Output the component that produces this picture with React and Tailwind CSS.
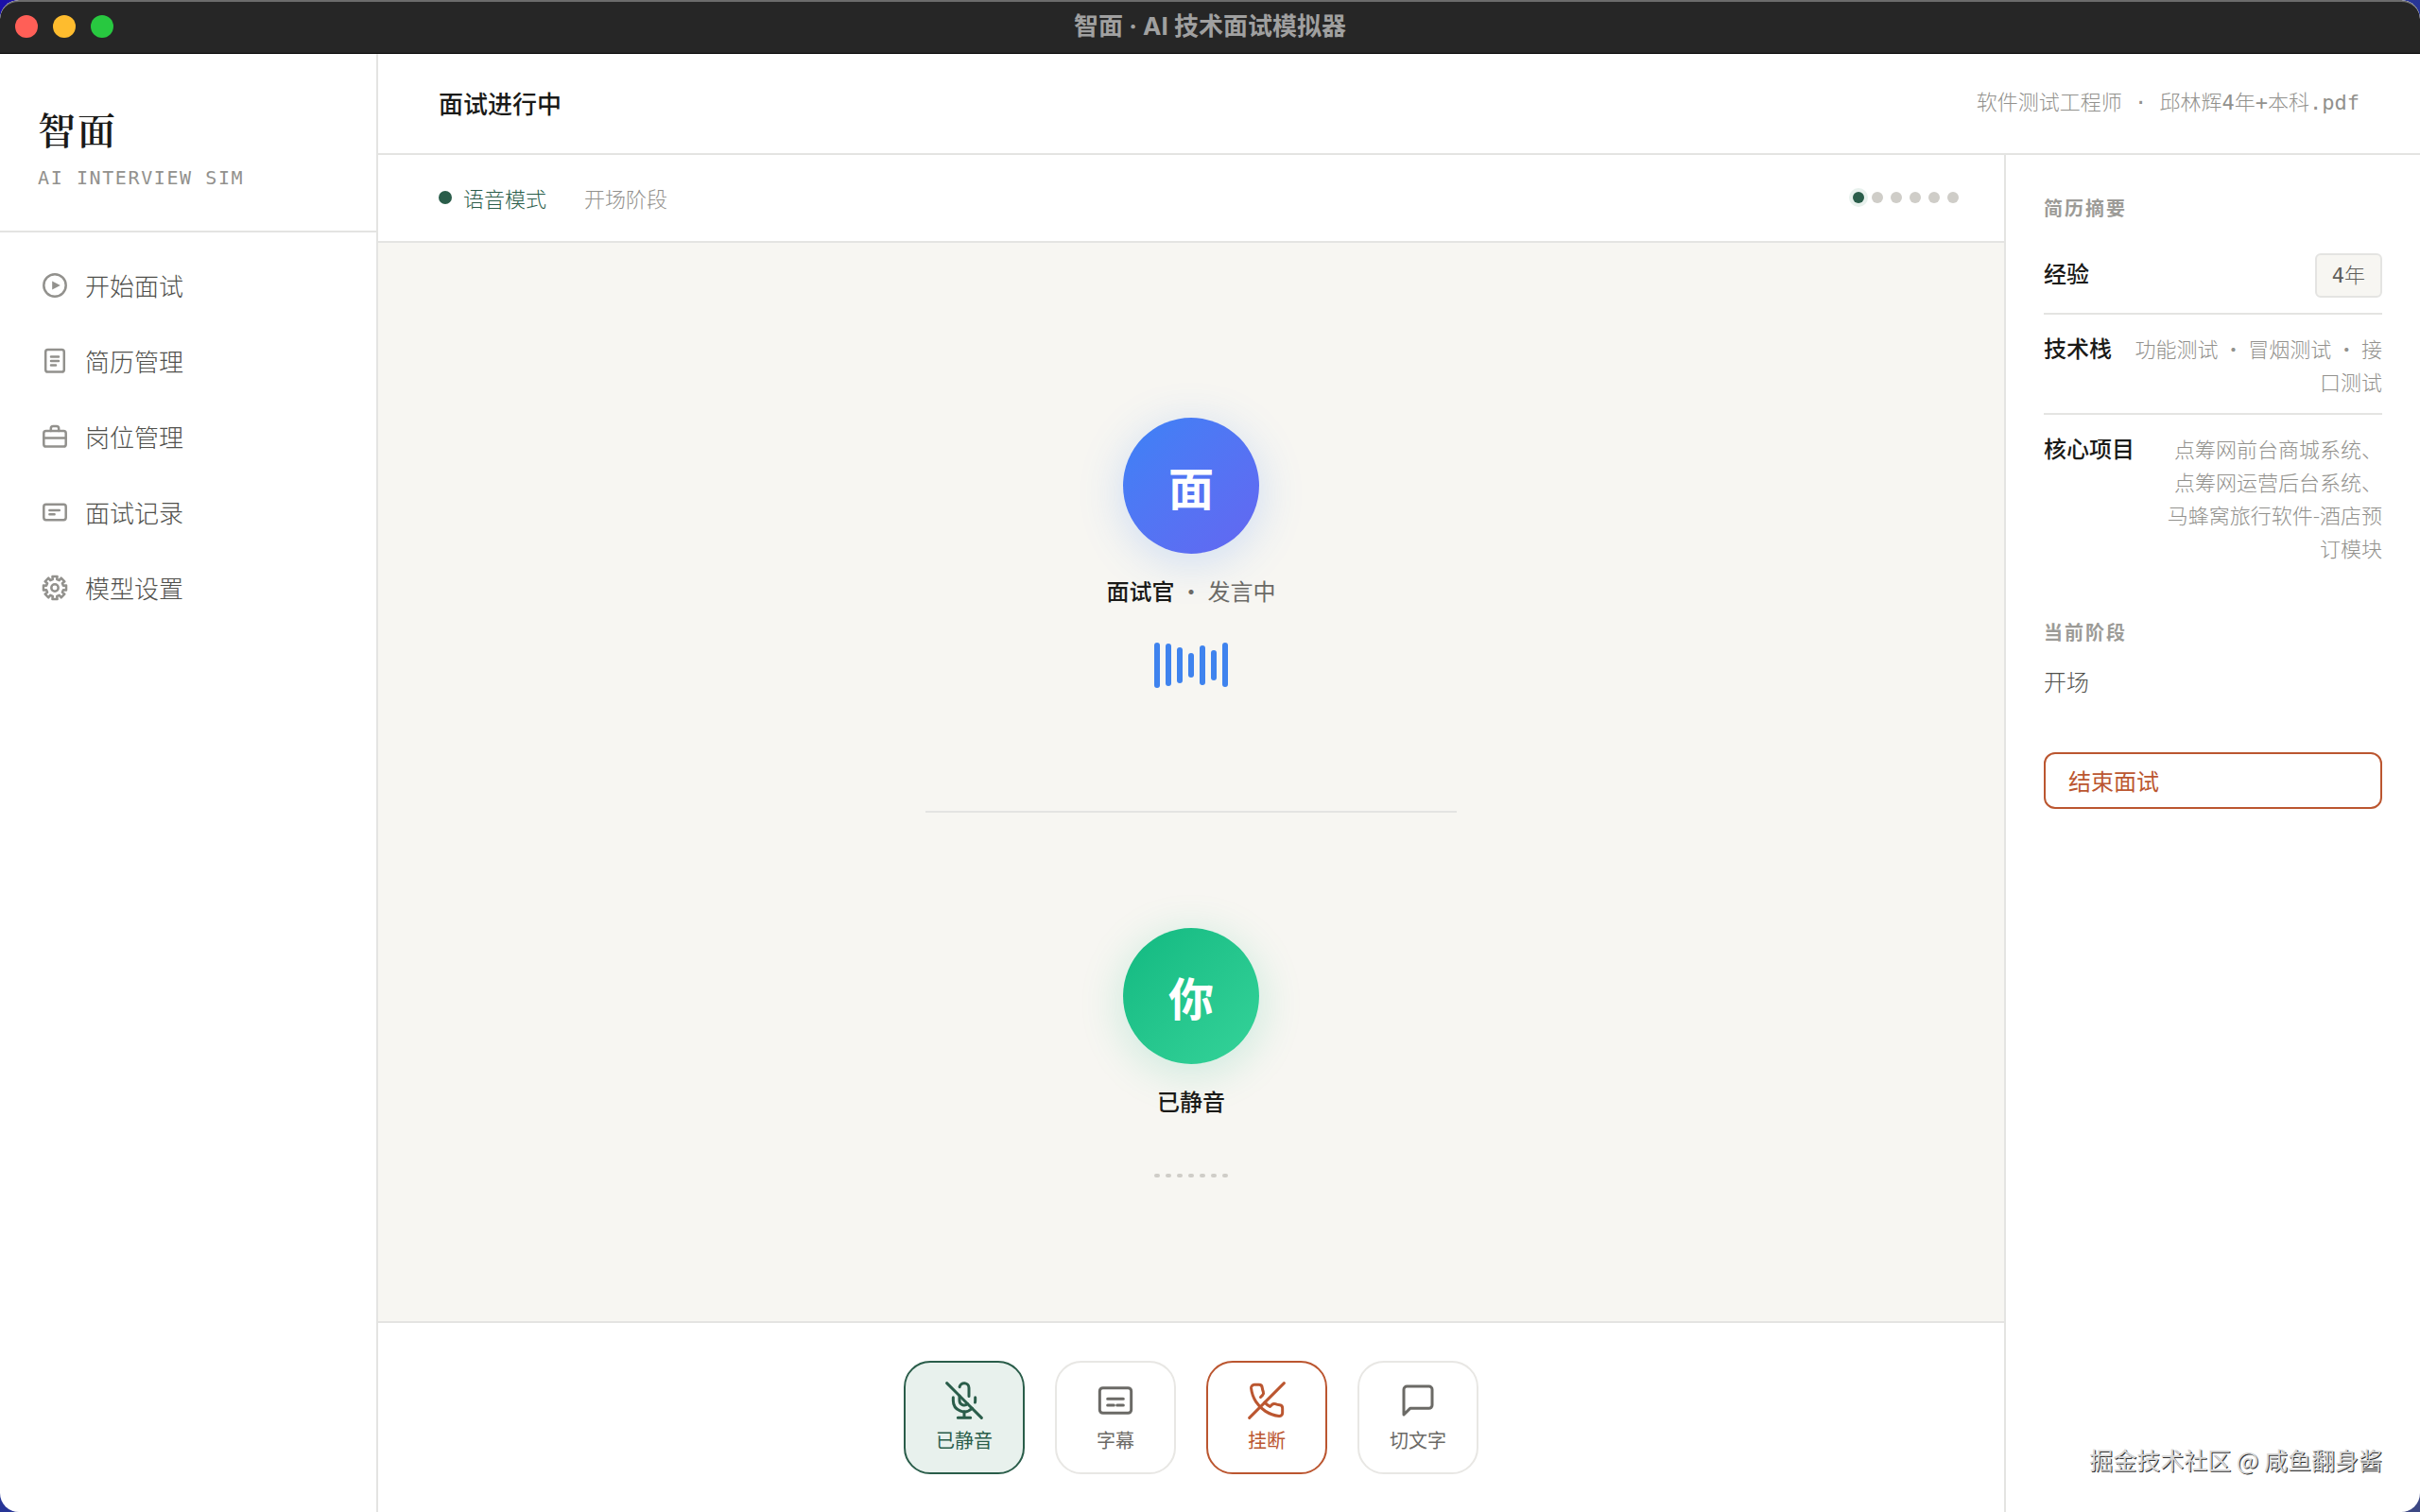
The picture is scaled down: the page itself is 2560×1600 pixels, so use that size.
import { useState } from 'react'
import clsx from 'clsx'

const NAV_ITEMS = [
  { id: 'start', label: '开始面试', icon: PlayIcon },
  { id: 'resume', label: '简历管理', icon: ResumeIcon },
  { id: 'position', label: '岗位管理', icon: BriefcaseIcon },
  { id: 'record', label: '面试记录', icon: RecordIcon },
  { id: 'model', label: '模型设置', icon: GearIcon },
]

const STAGES = ['开场', '自我介绍', '技术', '项目', '反问', '总结']
const SPEAKING_LEVELS = [48, 45, 38, 26, 42, 32, 47]
const SILENT_LEVELS = [4, 4, 4, 4, 4, 4, 4]

export default function App() {
  const [muted, setMuted] = useState(true)
  const [stage] = useState(0)

  return (
    <div lang="zh-CN" className="min-h-screen bg-linear-to-br from-[#1b10a8] to-[#3c4884] font-['Noto_Sans_CJK_SC',sans-serif]">
      <div className="relative flex min-h-screen flex-col overflow-hidden rounded-[20px] bg-white">
        <TitleBar />
        <div className="flex flex-1">
          <Sidebar />
          <div className="flex min-w-0 flex-1 flex-col">
            <header className="flex h-[107px] items-center justify-between border-b-2 border-[#e4e4e2] px-16 pb-0.5">
              <h1 className="text-[26px] leading-10 font-medium text-[#1a1a18]">面试进行中</h1>
              <p className="font-['DejaVu_Sans_Mono','Noto_Sans_CJK_SC',monospace] text-[22px] leading-9 font-light text-[#92918d]">
                软件测试工程师 · 邱林辉4年+本科.pdf
              </p>
            </header>
            <div className="flex flex-1">
              <main className="flex min-w-0 flex-1 flex-col">
                <StatusBar stage={stage} />
                <VoiceStage muted={muted} />
                <CallControls muted={muted} onToggleMute={() => setMuted(!muted)} />
              </main>
              <SummaryPanel stage={stage} />
            </div>
          </div>
        </div>
        <div className="pointer-events-none absolute right-10 bottom-[38px] text-[25px] leading-9 text-[#d8d8d8] [text-shadow:1px_1px_0_#333]">
          掘金技术社区 @ 咸鱼翻身酱
        </div>
      </div>
    </div>
  )
}

function TitleBar() {
  return (
    <div className="relative flex h-[57px] items-center justify-center rounded-t-[20px] border-t-2 border-b border-t-[#6b6b6b] border-b-black bg-[#262626] pb-0.5">
      <div className="absolute left-4 flex gap-4">
        <span className="size-6 rounded-full bg-[#ff5f57]" />
        <span className="size-6 rounded-full bg-[#febc2e]" />
        <span className="size-6 rounded-full bg-[#28c840]" />
      </div>
      <span className="font-[Inter,'Noto_Sans_CJK_SC',sans-serif] text-[26px] leading-9 font-bold text-[#a0a0a0]">
        智面 · AI 技术面试模拟器
      </span>
    </div>
  )
}

function Sidebar() {
  return (
    <aside className="w-[400px] shrink-0 border-r-2 border-[#e4e4e2]">
      <div className="border-b-2 border-[#e4e4e2] px-10 pt-[47px] pb-10">
        <div className="font-['Noto_Serif_CJK_SC','Noto_Sans_CJK_SC',serif] text-[40px] leading-16 font-semibold tracking-wider text-[#1a1a18]">
          智面
        </div>
        <div className="mt-1 font-['DejaVu_Sans_Mono',monospace] text-xl leading-8 tracking-[0.08em] text-[#92918d]">
          AI INTERVIEW SIM
        </div>
      </div>
      <nav className="flex flex-col pt-4">
        {NAV_ITEMS.map(({ id, label, icon: Icon }) => (
          <button key={id} type="button" className="flex h-20 items-center gap-3.5 px-10 text-left">
            <Icon />
            <span className="text-[26px] leading-10 font-light text-[#50504c]">{label}</span>
          </button>
        ))}
      </nav>
    </aside>
  )
}

function StatusBar({ stage }) {
  return (
    <div className="flex h-[93px] items-center border-b-2 border-[#e4e4e2] pr-12 pb-0.5 pl-16 text-[22px] leading-9 font-light">
      <span className="mr-3 size-3.5 rounded-full bg-[#2a5d4a]" />
      <span className="text-[#2a5d4a]">语音模式</span>
      <span className="ml-10 text-[#92918d]">{STAGES[stage]}阶段</span>
      <div className="ml-auto flex gap-2">
        {STAGES.map((name, i) => (
          <span
            key={name}
            className={clsx(
              'size-3 rounded-full',
              i === stage ? 'bg-[#2a5d4a] ring-4 ring-[#e8f1ed]' : 'bg-[#cfcdc8]'
            )}
          />
        ))}
      </div>
    </div>
  )
}

function VoiceStage({ muted }) {
  return (
    <section className="flex flex-1 flex-col items-center justify-center bg-[#f7f6f2] pt-[54px]">
      <Participant
        initial="面"
        avatarClass="from-[#3b82f6] to-[#6366f1] shadow-[0_8px_48px_rgba(59,130,246,0.22)]"
        levels={SPEAKING_LEVELS}
        barClass="bg-[#3f83ee]"
      >
        面试官 <span className="font-normal text-[#6b6a66]">・ 发言中</span>
      </Participant>
      <div className="mt-[130px] mb-[122px] h-0.5 w-[562px] bg-[#e4e4e2]" />
      <Participant
        initial="你"
        avatarClass="from-[#10b981] to-[#34d399] shadow-[0_8px_48px_rgba(16,185,129,0.2)]"
        levels={SILENT_LEVELS}
        barClass="bg-[#cfcdc8]"
      >
        {muted ? '已静音' : '聆听中'}
      </Participant>
    </section>
  )
}

function Participant({ initial, avatarClass, levels, barClass, children }) {
  return (
    <div className="flex flex-col items-center">
      <div
        className={clsx(
          'flex size-36 items-center justify-center rounded-full bg-linear-135 text-5xl font-bold text-white',
          avatarClass
        )}
      >
        {initial}
      </div>
      <p className="mt-5 text-2xl leading-[38px] font-medium text-[#1a1a18]">{children}</p>
      <div className="mt-9 flex h-12 items-center gap-1.5">
        {levels.map((level, i) => (
          <span key={i} className={clsx('w-1.5 rounded-full', barClass)} style={{ height: level }} />
        ))}
      </div>
    </div>
  )
}

function CallControls({ muted, onToggleMute }) {
  return (
    <footer className="flex justify-center gap-8 border-t-2 border-[#e4e4e2] py-10">
      <ControlButton
        label={muted ? '已静音' : '静音'}
        onClick={onToggleMute}
        className={muted ? 'border-[#2a5d4a] bg-[#e8f1ed] text-[#2a5d4a]' : 'border-[#e8e7e4] text-[#6b6a66]'}
      >
        <line x1="1" y1="1" x2="23" y2="23" />
        <path d="M9 9v3a3 3 0 0 0 5.12 2.12M15 9.34V4a3 3 0 0 0-5.94-.6" />
        <path d="M17 16.95A7 7 0 0 1 5 12v-2m14 0v2a7 7 0 0 1-.11 1.23" />
        <path d="M12 19v4M8 23h8" />
      </ControlButton>
      <ControlButton label="字幕" className="border-[#e8e7e4] text-[#6b6a66]">
        <rect x="2" y="4" width="20" height="16" rx="2" />
        <path d="M7 11h10M7 15h4M13 15h4" />
      </ControlButton>
      <ControlButton label="挂断" className="border-[#bb5630] text-[#bb5630]">
        <path d="M10.68 13.31a16 16 0 0 0 3.41 2.6l1.27-1.27a2 2 0 0 1 2.11-.45 12.84 12.84 0 0 0 2.81.7 2 2 0 0 1 1.72 2v3a2 2 0 0 1-2.18 2 19.79 19.79 0 0 1-8.63-3.07 19.42 19.42 0 0 1-6-6 19.79 19.79 0 0 1-3.07-8.67A2 2 0 0 1 4.11 2h3a2 2 0 0 1 2 1.72 12.84 12.84 0 0 0 .7 2.81 2 2 0 0 1-.45 2.11L8.09 9.91" />
        <line x1="23" y1="1" x2="1" y2="23" />
      </ControlButton>
      <ControlButton label="切文字" className="border-[#e8e7e4] text-[#6b6a66]">
        <path d="M21 15a2 2 0 0 1-2 2H7l-4 4V5a2 2 0 0 1 2-2h14a2 2 0 0 1 2 2z" />
      </ControlButton>
    </footer>
  )
}

function ControlButton({ label, className, onClick, children }) {
  return (
    <button
      type="button"
      onClick={onClick}
      className={clsx('flex h-30 w-32 flex-col items-center justify-center gap-2 rounded-[28px] border-2', className)}
    >
      <svg
        viewBox="0 0 24 24"
        className="size-10"
        fill="none"
        stroke="currentColor"
        strokeWidth="1.8"
        strokeLinecap="round"
        strokeLinejoin="round"
        aria-hidden="true"
      >
        {children}
      </svg>
      <span className="text-xl leading-7">{label}</span>
    </button>
  )
}

function SummaryPanel({ stage }) {
  return (
    <aside className="w-[440px] shrink-0 border-l-2 border-[#e4e4e2] px-10 pt-10">
      <h2 className="text-xl leading-8 font-semibold tracking-widest text-[#9c9b97]">简历摘要</h2>
      <dl className="mt-[15px] divide-y-2 divide-[#e4e4e2]">
        <SummaryRow term="经验">
          <span className="block rounded-md border-2 border-[#e4e4e2] bg-[#f7f6f2] px-4 py-1 font-['DejaVu_Sans_Mono','Noto_Sans_CJK_SC',monospace] text-[#5f5e5a]">
            4年
          </span>
        </SummaryRow>
        <SummaryRow term="技术栈">功能测试 ・ 冒烟测试 ・ 接口测试</SummaryRow>
        <SummaryRow term="核心项目">点筹网前台商城系统、点筹网运营后台系统、马蜂窝旅行软件-酒店预订模块</SummaryRow>
      </dl>
      <h2 className="mt-10 text-xl leading-8 font-semibold tracking-widest text-[#9c9b97]">当前阶段</h2>
      <p className="mt-4 text-2xl leading-10 font-light text-[#50504c]">{STAGES[stage]}</p>
      <button
        type="button"
        className="mt-[55px] w-full rounded-xl border-2 border-[#bb5630] px-6 py-2 text-left text-2xl leading-10 text-[#bb5630]"
      >
        结束面试
      </button>
    </aside>
  )
}

function SummaryRow({ term, children }) {
  return (
    <div className="flex items-baseline justify-between gap-[22px] pt-[17px] pb-4">
      <dt className="shrink-0 text-2xl leading-9 font-medium text-[#1a1a18]">{term}</dt>
      <dd className="text-right text-[22px] leading-[35px] font-light text-[#92918d]">{children}</dd>
    </div>
  )
}

// ---- Sidebar icons ----
function NavIcon({ children }) {
  return (
    <svg
      viewBox="0 0 36 36"
      className="size-9 shrink-0 text-[#92918d]"
      fill="none"
      stroke="currentColor"
      strokeWidth="2.5"
      strokeLinecap="round"
      strokeLinejoin="round"
      aria-hidden="true"
    >
      {children}
    </svg>
  )
}

function PlayIcon() {
  return (
    <NavIcon>
      <circle cx="18" cy="18" r="11.7" />
      <path d="M15.2 13.4v9.2L23.8 18z" fill="currentColor" stroke="none" />
    </NavIcon>
  )
}

function ResumeIcon() {
  return (
    <NavIcon>
      <rect x="8.2" y="6" width="19.6" height="23.6" rx="2.4" />
      <path d="M14 13.6h8M14 18h8M14 22.4h5" />
    </NavIcon>
  )
}

function BriefcaseIcon() {
  return (
    <NavIcon>
      <rect x="6.3" y="12" width="23.4" height="16.6" rx="2.4" />
      <path d="M13.8 12V9.4a2.4 2.4 0 0 1 2.4-2.4h3.6a2.4 2.4 0 0 1 2.4 2.4V12M6.3 19.6h23.4" />
    </NavIcon>
  )
}

function RecordIcon() {
  return (
    <NavIcon>
      <rect x="6.3" y="9.8" width="23.4" height="16.4" rx="2.4" />
      <path d="M12.4 16h10.4M12.4 20.2h5.2" />
    </NavIcon>
  )
}

// Eight teeth, each drawn root - tip - tip - root
const GEAR_POINTS = Array.from({ length: 8 }, (_, i) =>
  [[-14, 9.2], [-12, 12.3], [12, 12.3], [14, 9.2]].map(([offset, r]) => {
    const a = ((i * 45 + offset) * Math.PI) / 180
    return `${(18 + r * Math.sin(a)).toFixed(2)},${(18 - r * Math.cos(a)).toFixed(2)}`
  }).join(' ')
).join(' ')

function GearIcon() {
  return (
    <NavIcon>
      <polygon points={GEAR_POINTS} />
      <circle cx="18" cy="18" r="3.7" />
    </NavIcon>
  )
}
